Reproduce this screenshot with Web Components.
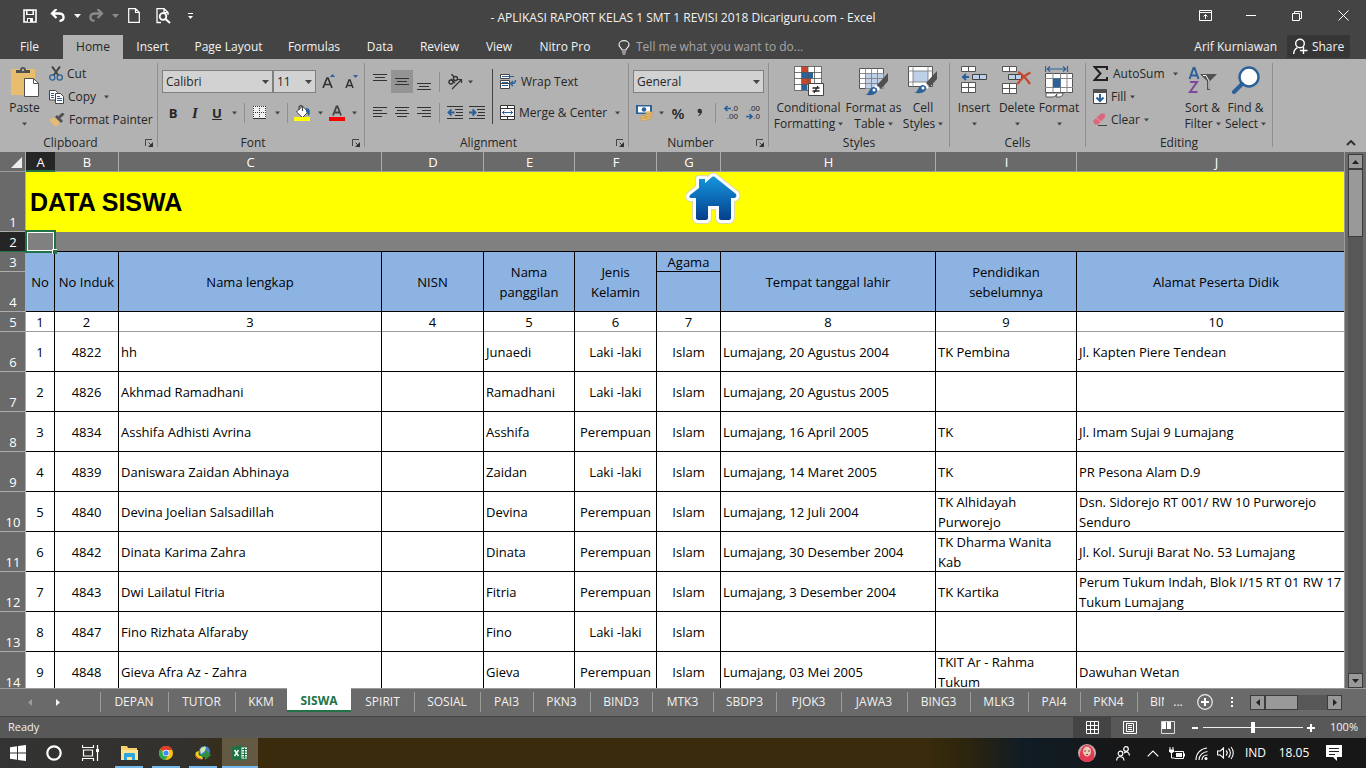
<!DOCTYPE html>
<html lang="id">
<head>
<meta charset="utf-8">
<title>- APLIKASI RAPORT KELAS 1 SMT 1 REVISI 2018 Dicariguru.com - Excel</title>
<style>
html, body {
  height: 100%;
  margin: 0;
  overflow: hidden;
}
body {
  font: 12px/16px "Open Sans", "Noto Sans", sans-serif;
  color: #262626;
}
</style>
</head>
<body>
<excel-app></excel-app>

<script>
// name: [width, height, svg body]
const ICONS = {
  caret: [7, 4, '<path d="M0 0h7L3.500 4z" fill="currentColor"/>'],
  launcher: [9, 9, '<path d="M.5 7V.5H7M3.500 3.500l3 3" stroke="#444" fill="none"/><path d="M8 3v5H3z" fill="#333"/>'],
  chevron: [10, 6, '<path d="M1 5l4-4 4 4" stroke="#333" stroke-width="2" fill="none"/>'],

  save: [14, 14, '<path d="M1 1h12v12H1z" fill="none" stroke="#fff" stroke-width="1.600"/><path d="M3 1h8v5H3zM4 9h6v4H4z" fill="#fff"/><path d="M4.500 2h5v3h-5z" fill="#444"/><path d="M5 10h2v3H5z" fill="#444"/>'],
  undo: [15, 13, '<path d="M1.500 4.500h7.500c6 0 6 7 .5 7.500M6.500 0l-4.500 4.500 4.500 4.500" fill="none" stroke="#fff" stroke-width="2.300"/>'],
  redo: [15, 13, '<path d="M13.500 4.500H6c-6 0-6 7-.5 7.500M8.500 0l4.500 4.500-4.500 4.500" fill="none" stroke="#8a8a8a" stroke-width="2.300"/>'],
  newdoc: [12, 15, '<path d="M.7.700h6.800l3.800 3.800v9.800H.7zM7.500.700v3.800h3.800" fill="none" stroke="#fff" stroke-width="1.200"/>'],
  preview: [15, 16, '<path d="M5 14.500H1V.7h7l4 3.800V7M8 .7v4h4" fill="none" stroke="#fff" stroke-width="1.300"/><circle cx="7" cy="8.500" r="3.300" fill="none" stroke="#fff" stroke-width="1.800"/><path d="M9.500 11l4.500 4" stroke="#fff" stroke-width="2.200"/>'],
  customize: [5, 6, '<path d="M0 .5h5" stroke="#fff"/><path d="M0 3h5L2.500 6z" fill="#fff"/>'],
  ribbonmode: [13, 11, '<path d="M.5.500h12v10H.5zM.5 2.500h12M6.500 9V4.500M4.500 6.500l2-2 2 2" fill="none" stroke="#fff"/>'],
  minimize: [10, 11, '<path d="M0 5.500h10" stroke="#fff"/>'],
  restore: [10, 10, '<path d="M.5 2.500h7v7h-7zM2.500 2V.5h7v7H8" fill="none" stroke="#fff"/>'],
  close: [11, 11, '<path d="M.5.500l10 10M10.500.500l-10 10" stroke="#fff"/>'],
  bulb: [12, 15, '<path d="M4 10c0-2-3-2.500-3-5.500C1 2.500 3 .7 6 .7s5 1.800 5 3.800C11 7.500 8 8 8 10zM4 12h4M4.500 14h3" fill="none" stroke="#e8e8e8" stroke-width="1.200"/>'],
  person: [15, 17, '<circle cx="7" cy="5.500" r="4.300" fill="none" stroke="#fff" stroke-width="1.400"/><path d="M.7 16c0-3 1.300-5 3.800-6.300M10.500 9v7M7 12.500h7.500" stroke="#fff" stroke-width="1.400" fill="none"/>'],

  paste: [30, 32, '<rect x="1" y="3" width="24" height="26" fill="#e8bd6d"/><path d="M6 7V4h4c0-4 6-4 6 0h4v3z" fill="#505050"/><circle cx="13" cy="4" r="1.200" fill="#b2b2b2"/><path d="M14.500 12.500h9l5 5v13h-14z" fill="#fff" stroke="#505050"/><path d="M23.500 12.500v5h5" fill="none" stroke="#505050"/>'],
  cut: [14, 15, '<path d="M3 .5l6.500 9M11 .5L4.500 9.500" stroke="#444" stroke-width="2"/><circle cx="3.300" cy="11.500" r="2.600" fill="none" stroke="#2b6099" stroke-width="1.300"/><circle cx="10.700" cy="11.500" r="2.600" fill="none" stroke="#2b6099" stroke-width="1.300"/>'],
  copy: [15, 14, '<path d="M.5.500h6l2 2v7.500h-8z" fill="#fff" stroke="#444"/><path d="M2 3.500h3M2 5.500h3M2 7.500h3" stroke="#2b6099"/><path d="M6.500 3.500h5l3 3v7h-8z" fill="#fff" stroke="#444"/><path d="M8 6.500h3M8 8.500h5M8 10.500h5" stroke="#2b6099"/>'],
  painter: [16, 14, '<path d="M0 6.500l6-2 5 5-4 4.500C4.500 12.500 2 9.500 0 6.500z" fill="#e6bb74"/><path d="M6 4l2-2 6 6-2 2z" fill="#505050"/><path d="M10 4.500L14.500.500" stroke="#505050" stroke-width="3"/>'],

  growfont: [13, 15, '<path d="M1 14L5 4h1l4 10M2.500 10.500h6" fill="none" stroke="#333" stroke-width="1.700"/><path d="M8 3h5L10.500 0z" fill="#2b6099"/>'],
  shrinkfont: [13, 15, '<path d="M1 14l3-8h1l3 8M2.300 11.500h4.500" fill="none" stroke="#333" stroke-width="1.500"/><path d="M8 1h5l-2.500 3z" fill="#2b6099"/>'],
  borders: [14, 14, '<path d="M0 0h13v12H0z" fill="#f2f2f2"/><path d="M.5 0v12M6.500 0v12M12.500 0v12M0 .5h13M0 6.500h13" stroke="#333" stroke-dasharray="1 1"/><path d="M0 12.500h13" stroke="#333"/>'],
  fill: [18, 16, '<path d="M2.500 7l6-6 5.500 6-5.500 5.500z" fill="#fff" stroke="#444"/><path d="M5 5V2.500C5 0 8.500 0 8.500 2.500V6" fill="none" stroke="#444" stroke-width="1.200"/><path d="M12 3c3.500 0 5 3 3 8-1.500-1-1-3-3-4z" fill="#2b6099"/><path d="M0 12h16v4H0z" fill="#ff0"/>'],
  fontcolor: [16, 16, '<path d="M4 10.500L7.500 1.500h1l3.500 9M5.500 7.500h5" fill="none" stroke="#444" stroke-width="1.800"/><path d="M0 12h16v4H0z" fill="red"/>'],

  atop: [14, 17, '<path d="M0 1.500h14M2 4.500h10M0 7.500h14" stroke="#333"/>'],
  amiddle: [14, 17, '<path d="M0 5.500h14M2 8.500h10M0 11.500h14" stroke="#333"/>'],
  abottom: [14, 17, '<path d="M0 10.500h14M2 13.500h10M0 16.500h14" stroke="#333"/>'],
  aleft: [14, 11, '<path d="M0 .5h14M0 3.500h9M0 6.500h14M0 9.500h9" stroke="#333"/>'],
  acenter: [14, 11, '<path d="M0 .5h14M2 3.500h10M0 6.500h14M2 9.500h10" stroke="#333"/>'],
  aright: [14, 11, '<path d="M0 .5h14M5 3.500h9M0 6.500h14M5 9.500h9" stroke="#333"/>'],
  orient: [17, 16, '<g fill="none" stroke="#333" stroke-width="1.400"><circle cx="4" cy="8" r="2"/><path d="M4 5l4 4"/><circle cx="8.500" cy="4.500" r="2"/><path d="M4.500 0L7 3"/></g><path d="M5 15L14 6M11 5.500h3.500V9" fill="none" stroke="#333" stroke-width="1.200"/>'],
  outdent: [16, 13, '<path d="M0 .5h16M8 3.500h8M9 6.500h7M8 9.500h8M0 12.500h16" stroke="#333"/><path d="M7.500 6.500H2M4.500 3.500l-3 3 3 3" stroke="#2b6099" stroke-width="1.800" fill="none"/>'],
  indent: [16, 13, '<path d="M0 .5h16M8 3.500h8M9 6.500h7M8 9.500h8M0 12.500h16" stroke="#333"/><path d="M0 6.500h5.500M3.500 3.500l3 3-3 3" stroke="#2b6099" stroke-width="1.800" fill="none"/>'],
  wrap: [17, 16, '<path d="M.5.500h9v4h-9zM.5 6.500h9v3h-9zM.5 9.500h9v5h-9z" fill="#fff" stroke="#444"/><path d="M2 2.500h12M2 8.500h6M2 11.500h6" stroke="#2b6099"/><path d="M15.500 6c0 3-1 3.500-4.500 3.500M13 7l-2.500 2.500L13 12" stroke="#2b6099" stroke-width="1.400" fill="none"/>'],
  merge: [15, 15, '<path d="M.5.500h14v14H.5z" fill="#fff" stroke="#333"/><path d="M.5 3.500h14M.5 11.500h14M7.500 0v3.500M7.500 11.500V15" stroke="#333"/><path d="M2 7.500h11M4.500 5.500l-2 2 2 2M10.500 5.500l2 2-2 2" stroke="#2b6099" fill="none"/>'],

  currency: [17, 16, '<path d="M0 0h16v9H0z" fill="#2b6099"/><path d="M2 1.500h12v6H2z" fill="#fff"/><circle cx="8" cy="4.500" r="2.300" fill="#2b6099"/><g fill="#e8bd6d" stroke="#b98c45" stroke-width=".5"><ellipse cx="13" cy="8" rx="3.500" ry="1.400"/><ellipse cx="13" cy="10.500" rx="3.500" ry="1.400"/><ellipse cx="12" cy="13" rx="3.500" ry="1.400"/><ellipse cx="7" cy="12" rx="3" ry="1.300"/><ellipse cx="8" cy="14.500" rx="3.500" ry="1.300"/></g>'],
  comma: [6, 10, '<circle cx="2.700" cy="3" r="2.200" fill="#333"/><path d="M4.900 2.500c.3 3-1 4.500-3.500 5.500l-.4-.8c1.500-.8 2.300-1.700 2.200-3z" fill="#333"/>'],
  arrowleft: [7, 7, '<path d="M7 3.500H1.500M3.500 1L1 3.500 3.500 6" stroke="#2b6099" stroke-width="1.600" fill="none"/>'],
  arrowright: [7, 7, '<path d="M0 3.500h5.500M3.500 1L6 3.500 3.500 6" stroke="#2b6099" stroke-width="1.600" fill="none"/>'],

  conditional: [30, 30, '<path d="M.5.500h27v24H.5z" fill="#fff"/><path d="M8 0h6v6H8zM8 12h9v6H8z" fill="#c8472c"/><path d="M8 6h11v6H8zM8 18h5v6H8z" fill="#2b6099"/><path d="M.5.500h27v24H.5zM7.500 0v25M14 0v25M20.500 0v25M0 6.500h28M0 12.500h28M0 18.500h28" stroke="#555" fill="none" stroke-width=".8"/><path d="M14.500 17.500h15v12h-15z" fill="#fff" stroke="#444"/><path d="M18.500 22h7M18.500 25h7M24 20l-4 7" stroke="#222" stroke-width="1.300"/>'],
  astable: [30, 30, '<path d="M.5 2.500h24v20H.5z" fill="#fff" stroke="#555"/><path d="M6.500 7.500h18v15h-18z" fill="#bdd0e8"/><path d="M6.500 2v21M12.500 2v21M18.500 2v21M0 7.500h25M0 12.500h25M0 17.500h25" stroke="#777" stroke-width=".8"/><path d="M29 7v8l-7 8-4-4z" fill="#505050"/><path d="M17 19l4 4-2 2-4-4z" fill="#fff"/><path d="M6 29c4 0 4-8 9-8 4 1 4 4 2 6-3 3-7 2-11 2z" fill="#2b6099"/><circle cx="15" cy="24" r="1.500" fill="#fff"/>'],
  cellstyles: [30, 30, '<path d="M.5.500h24v20H.5z" fill="#fff" stroke="#555"/><path d="M5 5h15v11H5z" fill="#bdd0e8"/><path d="M5 0v21M20 0v21M0 5h25M0 16h25" stroke="#777" stroke-width=".8"/><path d="M29 5v8l-7 8-4-4z" fill="#505050"/><path d="M17 17l4 4-2 2-4-4z" fill="#fff"/><path d="M6 27c4 0 4-8 9-8 4 1 4 4 2 6-3 3-7 2-11 2z" fill="#2b6099"/><circle cx="15" cy="22" r="1.500" fill="#fff"/>'],
  insert: [26, 30, '<path d="M.5.500h14v5H.5zM7.500.500v5M.5 16.500h14v10H.5zM7.500 16.500v10M.5 21.500h14" fill="#fff" stroke="#555"/><path d="M11.500 8.500h14v5h-14zM18.500 8.500v5" fill="#bdd0e8" stroke="#444"/><path d="M1 11h7M5 8l-3 3 3 3" stroke="#2b6099" fill="none" stroke-width="1.800"/>'],
  remove: [30, 30, '<path d="M.5.500h14v5H.5zM7.500.500v5M.5 17.500h14v10H.5zM7.500 17.500v10M.5 22.500h14" fill="#fff" stroke="#555"/><path d="M6.500 8.500h13v5h-13zM13.500 8.500v5" fill="#bdd0e8" stroke="#444"/><path d="M16 6c4 2 8 6 12 12M28.500 6.500C23 9 19 13 15.500 18" stroke="#c8472c" fill="none" stroke-width="2.300"/>'],
  format: [28, 32, '<path d="M.5 0v6M22.500 0v6M2 3h19M5 .5L2.300 3 5 5.500M18 .5L20.700 3 18 5.500" stroke="#2b6099" fill="none" stroke-width="1.200"/><path d="M.5 7.500h27v19H.5z" fill="#fff" stroke="#555"/><path d="M8 7v20M15.500 7v20M22 7v20M0 12.500h28M0 21.500h28" stroke="#888"/><path d="M8 12.500h7.500v9H8z" fill="#2b6099"/><path d="M1 27h17c0 3-2 4-4 4h-3l1-3c-1 2-3 3-5 3H1z" fill="#fff" stroke="#555"/>'],
  sum: [16, 15, '<path d="M14 4V1H1.500l6 6.500-6 6.500H14v-3" fill="none" stroke="#222" stroke-width="2"/>'],
  filldown: [14, 15, '<path d="M.5.500h13v14H.5z" fill="#fff" stroke="#444"/><path d="M0 0h14v4H0z" fill="#505050"/><path d="M7 5v7M3.500 8.500L7 12l3.500-3.500" stroke="#2b6099" stroke-width="2" fill="none"/>'],
  erase: [14, 13, '<path d="M0 8l8-7.500h3.500l1 3L5 11.500H2z" fill="#d9687c"/><path d="M3 4.500l5 4.500" stroke="#eba0ab"/><path d="M5 12.500h9" stroke="#444"/>'],
  sortfilter: [29, 28, '<path d="M1.500 13L5.500 2h1l4 11M3 9.500h6" fill="none" stroke="#2b6099" stroke-width="2"/><path d="M2 16h7L2 26h7.500" fill="none" stroke="#7f47a0" stroke-width="2"/><path d="M12 8h17l-7 7v9h-3v-9z" fill="#505050"/><path d="M15 9.500h3l3 5.500v8" fill="none" stroke="#fff"/>'],
  find: [28, 28, '<circle cx="17" cy="11" r="9.500" fill="#fff" stroke="#2b6099" stroke-width="2.400"/><path d="M10 18l-8 8" stroke="#2b6099" stroke-width="4" stroke-linecap="round"/>'],

  house: [56, 54, '<defs><linearGradient id="sky" x2="0" y2="1"><stop offset="0" stop-color="#1595dd"/><stop offset="1" stop-color="#053f8c"/></linearGradient></defs><path d="M26 5c2-1 3 0 4 1l20 16c1 2 0 4-2 4h-3v20c0 1-1 2-2 2h-8c-1 0-2-1-2-2V34h-11v12c0 1-1 2-2 2h-8c-1 0-2-1-2-2V26H5c-2 0-2-2-1-3l9-7V7h6v4z" fill="#ddd" stroke="#d8d8b0" stroke-width="8" stroke-linejoin="round"/><path d="M26 5c2-1 3 0 4 1l20 16c1 2 0 4-2 4h-3v20c0 1-1 2-2 2h-8c-1 0-2-1-2-2V34h-11v12c0 1-1 2-2 2h-8c-1 0-2-1-2-2V26H5c-2 0-2-2-1-3l9-7V7h6v4z" fill="url(#sky)" stroke="#fff" stroke-width="6" stroke-linejoin="round" paint-order="stroke"/>'],
  selectall: [11, 11, '<path d="M11 0v11H0z" fill="#eee"/>'],
  up: [7, 4, '<path d="M0 4h7L3.500 0z" fill="#222"/>'],
  left: [4, 7, '<path d="M4 0v7L0 3.500z" fill="currentColor"/>'],
  right: [4, 7, '<path d="M0 0v7l4-3.500z" fill="currentColor"/>'],
  addsheet: [16, 16, '<circle cx="8" cy="8" r="7.300" fill="none" stroke="#eee" stroke-width="1.200"/><path d="M8 4v8M4 8h8" stroke="#fff" stroke-width="2"/>'],
  dots: [2, 11, '<path d="M0 0h2v2H0zM0 4h2v2H0zM0 8h2v2H0z" fill="#fff"/>'],
  viewnormal: [13, 13, '<path d="M.5.500h12v12H.5zM4.500 0v13M8.500 0v13M0 4.500h13M0 8.500h13" fill="none" stroke="#fff"/>'],
  viewpage: [14, 13, '<path d="M.5.500h13v12H.5zM3.500 2.500h7v8h-7zM5 4.500h4M5 6.500h4M5 8.500h4" fill="none" stroke="#fff"/>'],
  viewbreak: [14, 13, '<path d="M.5.500h13v12H.5z" fill="none" stroke="#ddd"/><path d="M1 1h4v7H1zM6 1h4v7H6z" fill="#fff"/>'],
  minus: [6, 2, '<path d="M0 0h6v2H0z" fill="#fff"/>'],
  plus: [8, 8, '<path d="M0 4h8M4 0v8" stroke="#fff" stroke-width="2"/>'],

  windows: [16, 16, '<path d="M0 2.300l7-1v6.200H0zM8 1.100L16 0v7.500H8zM0 8.500h7v6.200l-7-1zM8 8.500h8V16l-8-1.100z" fill="#fff"/>'],
  cortana: [16, 16, '<circle cx="8" cy="8" r="6.700" fill="none" stroke="#fff" stroke-width="2.200"/>'],
  taskview: [17, 16, '<path d="M1.500 5h9v6h-9zM.5 0v2.500h11V0M.5 16v-2.500h11V16M15.500 0v16" fill="none" stroke="#fff" stroke-width="1.200"/><path d="M14 4h3v3h-3z" fill="#fff"/>'],
  explorer: [17, 15, '<path d="M0 2V0h6l1 2h9v12H0z" fill="#f7d070"/><path d="M0 4h17v10H0z" fill="#fde591"/><path d="M3 14V8c0-1 1-1 1-1h9s1 0 1 1v6h-3v-3H6v3z" fill="#2fa5e0"/>'],
  chrome: [14, 14, '<circle cx="7" cy="7" r="7" fill="#fbc116"/><path d="M7 7L1 3.500C4-1.500 11-1 13.200 4H7z" fill="#e33b2e"/><path d="M1 3.500C-1.500 8 1 13.500 6.500 14L9.500 8.500H7z" fill="#2da94f"/><circle cx="7" cy="7" r="3.300" fill="#fff"/><circle cx="7" cy="7" r="2.600" fill="#4285f4"/>'],
  idm: [16, 14, '<circle cx="9.500" cy="5.500" r="5.500" fill="#3c83c8"/><path d="M5 4c1-3 4-4 6-3l-1 4-4 3z" fill="#d5e6a8"/><path d="M1 6c-2 6 2 8 7 7l-1-3C4 10 3 9 4 5z" fill="#e8d320"/><path d="M4 8c2 1 4 1 6-1V4l6 5-6 5v-3c-3 0-5-1-6-3z" fill="#2e8f35"/><path d="M1 10c1 2 3 3 5 3" stroke="#c33" fill="none"/>'],
  excel: [16, 16, '<path d="M0 2l9-2v16l-9-2z" fill="#1f7246"/><path d="M9 2h6.500v12H9z" fill="#fff" stroke="#1f7246"/><path d="M10 4.500h5M10 7h5M10 9.500h5M10 12h5M12.500 3v10" stroke="#1f7246"/><path d="M2.500 5l4 6M6.500 5l-4 6" stroke="#fff" stroke-width="1.400"/>'],
  avatar: [18, 18, '<circle cx="9" cy="9" r="9" fill="#c9a6a6"/><path d="M2 14.500C1 8 4 1 9 1s8 7 7 13.500c-3 4.500-11 4.500-14 0z" fill="#e03a55"/><ellipse cx="9" cy="7.500" rx="4" ry="5" fill="#edc9b8"/><path d="M6 7h2M10 7h2M8 10.500h2" stroke="#7a4438"/>'],
  people: [14, 15, '<g fill="none" stroke="#fff" stroke-width="1.200"><circle cx="4.500" cy="7.500" r="2.300"/><path d="M.7 14.500c0-5 7-5 7.300 0"/><circle cx="10" cy="3" r="2.300"/><path d="M8 7c3-2 5-1 5.500 2.500"/></g>'],
  trayup: [12, 7, '<path d="M.7 6.300L6 1l5.300 5.300" stroke="#fff" fill="none" stroke-width="1.200"/>'],
  battery: [16, 13, '<path d="M5.500 4.500h9v7h-9" fill="none" stroke="#fff"/><path d="M7 6h6v4H7zM15 6.500h1v3h-1z" fill="#fff"/><path d="M1 0v3M4 0v3M2.500 5v6h3" stroke="#fff" fill="none"/><path d="M0 2.500h5v2L3.500 6h-2L0 4.500z" fill="#fff"/>'],
  wifi: [13, 13, '<g fill="none" stroke="#fff" stroke-width="1.100"><path d="M1 13C1 6 6 1.500 12 1"/><path d="M4 13c0-5 4-8 8.500-8.500"/><path d="M7 13c0-3 2-5 5.500-5"/></g><circle cx="11" cy="11.500" r="1.500" fill="#fff"/>'],
  volume: [17, 14, '<path d="M.6 5h2.700L6.500 2v10L3.300 9H.6zM9 4.500c1.500 1.500 1.500 3.500 0 5M11.500 2.500c2.500 2.500 2.500 6.500 0 9M14 1c3 3.500 3 8.500 0 12" fill="none" stroke="#fff" stroke-width="1.100"/>'],
  notify: [16, 16, '<path d="M0 0h16v12h-5v4l-4-4H0z" fill="#fff"/><path d="M3 3.500h10M3 6.500h10M3 9.500h6" stroke="#222"/>'],
};

const svg = (name) => {
  const [w, h, body] = ICONS[name];
  return `<svg width="${w}" height="${h}" viewBox="0 0 ${w} ${h}" aria-hidden="true">${body}</svg>`;
};

const base = `
button, select, input { font: inherit; color: inherit; margin: 0; }
button { display: flex; align-items: center; justify-content: center; border: 0; padding: 0; background: none; white-space: nowrap; }
svg { display: block; flex: none; }
`;

/** Declares an element from a style sheet and a render function. */
function component(tag, style, render) {
  customElements.define(tag, class extends HTMLElement {
    constructor() {
      super();
      this.attachShadow({ mode: "open" });
    }
    connectedCallback() {
      const template = document.createElement("template");
      template.innerHTML = `<style>${base}${style}</style>${render(this)}`;
      this.shadowRoot.replaceChildren(template.content.cloneNode(true));
    }
  });
}

const attr = (el, name, fallback = "") => el.getAttribute(name) ?? fallback;

/* ---------- title bar and tabs ---------- */

component("title-bar", `
:host { display: grid; grid-template-columns: 1fr auto 1fr; align-items: center; height: 35px; background: #444; color: #f2f2f2; }
.quick { display: flex; align-items: center; padding: 0 0 4px 18px; }
.quick button { height: 24px; width: 30px; }
.quick .save { width: 24px; }
.quick .drop { width: 10px; }
.quick .new { width: 28px; }
.quick .end { width: 24px; }
.quick .off { color: #8a8a8a; }
h1 { margin: 0; font-size: 12px; font-weight: 400; }
.window { display: flex; justify-content: flex-end; padding-bottom: 4px; }
.window button { width: 46px; height: 30px; }
`, () => `
<div class="quick">
  <button class="save" aria-label="Save">${svg("save")}</button>
  <button aria-label="Undo">${svg("undo")}</button>
  <button class="drop" aria-label="Undo list">${svg("caret")}</button>
  <button class="new" aria-label="Redo">${svg("redo")}</button>
  <button class="drop off" aria-label="Redo list">${svg("caret")}</button>
  <button class="new" aria-label="New">${svg("newdoc")}</button>
  <button aria-label="Print Preview">${svg("preview")}</button>
  <button class="end" aria-label="Customize Quick Access Toolbar">${svg("customize")}</button>
</div>
<h1><slot></slot></h1>
<div class="window">
  <button aria-label="Ribbon Display Options">${svg("ribbonmode")}</button>
  <button aria-label="Minimize">${svg("minimize")}</button>
  <button aria-label="Restore">${svg("restore")}</button>
  <button aria-label="Close">${svg("close")}</button>
</div>`);

const MENU = [["File", 59], ["Home", 60], ["Insert", 59], ["Page Layout", 93], ["Formulas", 78],
  ["Data", 54], ["Review", 65], ["View", 54], ["Nitro Pro", 78]];

component("ribbon-tabs", `
:host { display: flex; height: 24px; background: #444; color: #f2f2f2; }
nav { display: flex; }
nav button:first-child { margin-right: 4px; }
nav .on { background: #b2b2b2; color: #262626; }
label { display: flex; align-items: center; gap: 6px; margin-left: 14px; flex: 1; }
input { width: 200px; border: 0; background: none; padding: 0; outline: 0; }
input::placeholder { color: #a6a6a6; opacity: 1; }
.share { gap: 4px; width: 63px; margin: 0 16px 1px 10px; background: #363636; }
.user { align-self: center; }
`, () => `
<nav>${MENU.map(([name, width]) =>
  `<button class="${name === "Home" ? "on" : ""}" style="width:${width}px">${name}</button>`).join("")}</nav>
<label>${svg("bulb")}<input type="text" aria-label="Tell me" placeholder="Tell me what you want to do..."></label>
<span class="user">Arif Kurniawan</span>
<button class="share">${svg("person")}Share</button>`);

/* ---------- ribbon ---------- */

component("ribbon-group", `
:host { display: flex; height: 93px; }
.main { flex: 1; min-width: 0; display: flex; flex-direction: column; }
.body { flex: 1; display: flex; min-height: 0; }
.foot { display: flex; align-items: center; height: 18px; }
.name { flex: 1; text-align: center; }
.foot button { width: 16px; height: 16px; }
.line { width: 1px; margin: 4px 0 5px; background: #8f8f8f; }
`, (el) => `
<div class="main">
  <div class="body"><slot></slot></div>
  <div class="foot"><span class="name">${attr(el, "label")}</span>
  ${el.hasAttribute("launcher") ? `<button aria-label="${attr(el, "label")} settings">${svg("launcher")}</button>` : ""}</div>
</div>
<div class="line"></div>`);

/** Large button: icon over one or two lines, the last one with a caret. */
component("ribbon-big", `
:host { display: block; flex: none; padding-top: 7px; }
button { flex-direction: column; width: 100%; }
.icon { height: 34px; display: flex; align-items: flex-start; }
.line { display: flex; align-items: center; justify-content: center; gap: 3px; height: 16px; color: #262626; }
.line svg { width: 5px; color: #444; }
`, (el) => `
<button>
  <span class="icon">${svg(attr(el, "icon"))}</span>
  <span class="line">${attr(el, "label")}</span>
  <span class="line">${attr(el, "second")}${svg("caret")}</span>
</button>`);

/** Small button: icon with an optional text and caret. */
component("ribbon-small", `
:host { display: flex; flex: none; height: 23px; min-width: 22px; }
:host([on]) { background: #949494; }
button { flex: 1; }
.icon { display: flex; }
.text { padding-left: 4px; }
.caret { color: #444; }
* + .caret { padding-left: 4px; }
:host([far]) .caret { padding-left: 8px; }
.caret svg { width: 5px; }
`, (el) => `
<button aria-label="${attr(el, "label", attr(el, "text"))}">
  ${el.hasAttribute("icon") ? `<span class="icon">${svg(attr(el, "icon"))}</span>` : ""}
  ${el.hasAttribute("text") ? `<span class="text">${attr(el, "text")}</span>` : ""}
  ${el.hasAttribute("drop") ? `<span class="caret">${svg("caret")}</span>` : "<slot></slot>"}
</button>`);

component("ribbon-select", `
:host { display: grid; flex: none; height: 23px; }
select { grid-area: 1 / 1; appearance: none; box-sizing: border-box; width: 100%; height: 23px; padding: 0 18px 0 3px;
  border: 1px solid #808080; border-radius: 0; background: #d2d2d2; }
span { grid-area: 1 / 1; justify-self: end; align-self: center; padding-right: 4px; color: #444; pointer-events: none; }
`, (el) => `
<select aria-label="${attr(el, "label")}"><option>${attr(el, "value")}</option></select>
<span>${svg("caret")}</span>`);

component("excel-ribbon", `
:host { display: grid; grid-template-columns: 158px 207px 264px 140px 181px 136px 187px 1fr; height: 93px; background: #b2b2b2; }
.list { display: flex; flex-direction: column; align-items: flex-start; padding-top: 3px; }
.rows { display: flex; flex-direction: column; gap: 8px; padding-top: 11px; }
.row { display: flex; align-items: center; height: 23px; }
.sep { width: 1px; height: 20px; background: #8f8f8f; margin: 0 4px; flex: none; }
.tall { width: 1px; background: #444; margin: 10px 7px 10px 4px; }
.drop { min-width: 12px; width: 12px; }
.b { font-weight: 700; font-size: 13px; }
.i { font-style: italic; font-family: "Liberation Serif", serif; font-weight: 700; font-size: 15px; }
.u { font-weight: 700; font-size: 13px; text-decoration: underline; }
.pct { font-size: 15px; font-weight: 600; }
.dec { display: flex; flex-direction: column; align-items: flex-end; font: 8px/8px "Liberation Sans", sans-serif; }
.dec span { display: flex; align-items: center; }
.end { display: flex; align-items: flex-end; justify-content: flex-end; padding: 0 10px 6px 0; }
`, () => `
<ribbon-group label="Clipboard" launcher>
  <ribbon-big icon="paste" label="Paste" style="width:49px"></ribbon-big>
  <div class="list">
    <ribbon-small icon="cut" text="Cut"></ribbon-small>
    <ribbon-small icon="copy" text="Copy" drop far></ribbon-small>
    <ribbon-small icon="painter" text="Format Painter"></ribbon-small>
  </div>
</ribbon-group>
<ribbon-group label="Font" launcher>
  <div class="rows" style="padding-left:4px">
    <div class="row">
      <ribbon-select label="Font" value="Calibri" style="width:111px"></ribbon-select>
      <ribbon-select label="Font Size" value="11" style="width:43px"></ribbon-select>
      <ribbon-small icon="growfont" label="Increase Font Size" style="width:24px"></ribbon-small>
      <ribbon-small icon="shrinkfont" label="Decrease Font Size"></ribbon-small>
    </div>
    <div class="row">
      <ribbon-small label="Bold"><span class="b">B</span></ribbon-small>
      <ribbon-small label="Italic"><span class="i">I</span></ribbon-small>
      <ribbon-small label="Underline"><span class="u">U</span></ribbon-small>
      <ribbon-small class="drop" drop label="Underline options"></ribbon-small>
      <span class="sep"></span>
      <ribbon-small icon="borders" label="Borders"></ribbon-small>
      <ribbon-small class="drop" drop label="Border options"></ribbon-small>
      <span class="sep"></span>
      <ribbon-small icon="fill" label="Fill Color"></ribbon-small>
      <ribbon-small class="drop" drop label="Fill colors"></ribbon-small>
      <ribbon-small icon="fontcolor" label="Font Color"></ribbon-small>
      <ribbon-small class="drop" drop label="Font colors"></ribbon-small>
    </div>
  </div>
</ribbon-group>
<ribbon-group label="Alignment" launcher>
  <div class="rows" style="padding-left:4px">
    <div class="row">
      <ribbon-small icon="atop" label="Top Align"></ribbon-small>
      <ribbon-small icon="amiddle" label="Middle Align" on></ribbon-small>
      <ribbon-small icon="abottom" label="Bottom Align"></ribbon-small>
      <span class="sep"></span>
      <ribbon-small icon="orient" label="Orientation" drop style="width:32px"></ribbon-small>
    </div>
    <div class="row">
      <ribbon-small icon="aleft" label="Align Left"></ribbon-small>
      <ribbon-small icon="acenter" label="Center"></ribbon-small>
      <ribbon-small icon="aright" label="Align Right"></ribbon-small>
      <span class="sep"></span>
      <ribbon-small icon="outdent" label="Decrease Indent"></ribbon-small>
      <ribbon-small icon="indent" label="Increase Indent"></ribbon-small>
    </div>
  </div>
  <span class="tall"></span>
  <div class="rows">
    <div class="row"><ribbon-small icon="wrap" text="Wrap Text"></ribbon-small></div>
    <div class="row"><ribbon-small icon="merge" text="Merge &amp; Center" drop far></ribbon-small></div>
  </div>
</ribbon-group>
<ribbon-group label="Number" launcher>
  <div class="rows" style="padding-left:4px">
    <div class="row"><ribbon-select label="Number Format" value="General" style="width:131px"></ribbon-select></div>
    <div class="row">
      <ribbon-small icon="currency" label="Accounting Format"></ribbon-small>
      <ribbon-small class="drop" drop label="Accounting options"></ribbon-small>
      <ribbon-small label="Percent Style"><span class="pct">%</span></ribbon-small>
      <ribbon-small icon="comma" label="Comma Style"></ribbon-small>
      <span class="sep"></span>
      <ribbon-small label="Increase Decimal"><div class="dec"><span>${svg("arrowleft")}.0</span><span>.00</span></div></ribbon-small>
      <ribbon-small label="Decrease Decimal"><div class="dec"><span>.00</span><span>${svg("arrowright")}.0</span></div></ribbon-small>
    </div>
  </div>
</ribbon-group>
<ribbon-group label="Styles">
  <ribbon-big icon="conditional" label="Conditional" second="Formatting" style="width:79px"></ribbon-big>
  <ribbon-big icon="astable" label="Format as" second="Table" style="width:51px"></ribbon-big>
  <ribbon-big icon="cellstyles" label="Cell" second="Styles" style="width:48px"></ribbon-big>
</ribbon-group>
<ribbon-group label="Cells">
  <ribbon-big icon="insert" label="Insert" style="width:48px"></ribbon-big>
  <ribbon-big icon="remove" label="Delete" style="width:38px"></ribbon-big>
  <ribbon-big icon="format" label="Format" style="width:46px"></ribbon-big>
</ribbon-group>
<ribbon-group label="Editing">
  <div class="list" style="padding-left:7px;width:88px">
    <ribbon-small icon="sum" text="AutoSum" drop far></ribbon-small>
    <ribbon-small icon="filldown" text="Fill" drop></ribbon-small>
    <ribbon-small icon="erase" text="Clear" drop></ribbon-small>
  </div>
  <ribbon-big icon="sortfilter" label="Sort &amp;" second="Filter" style="width:43px"></ribbon-big>
  <ribbon-big icon="find" label="Find &amp;" second="Select" style="width:43px"></ribbon-big>
</ribbon-group>
<div class="end"><button aria-label="Collapse the Ribbon">${svg("chevron")}</button></div>`);

/* ---------- worksheet ---------- */

const COLUMNS = [["A", 29], ["B", 64], ["C", 263], ["D", 102], ["E", 91], ["F", 82], ["G", 64],
  ["H", 215], ["I", 141], ["J", 0]];

const HEADINGS = ["No", "No Induk", "Nama lengkap", "NISN", "Nama\npanggilan", "Jenis\nKelamin", "Agama",
  "Tempat tanggal lahir", "Pendidikan\nsebelumnya", "Alamat Peserta Didik"];

const STUDENTS = [
  ["4822", "hh", "Junaedi", "Laki -laki", "Lumajang, 20 Agustus 2004", "TK Pembina", "Jl. Kapten Piere Tendean"],
  ["4826", "Akhmad Ramadhani", "Ramadhani", "Laki -laki", "Lumajang, 20 Agustus 2005", "", ""],
  ["4834", "Asshifa Adhisti Avrina", "Asshifa", "Perempuan", "Lumajang, 16 April 2005", "TK", "Jl. Imam Sujai 9 Lumajang"],
  ["4839", "Daniswara Zaidan Abhinaya", "Zaidan", "Laki -laki", "Lumajang, 14 Maret 2005", "TK", "PR Pesona Alam D.9"],
  ["4840", "Devina Joelian Salsadillah", "Devina", "Perempuan", "Lumajang, 12 Juli 2004", "TK Alhidayah\nPurworejo", "Dsn. Sidorejo RT 001/ RW 10 Purworejo\nSenduro"],
  ["4842", "Dinata Karima Zahra", "Dinata", "Perempuan", "Lumajang, 30 Desember 2004", "TK Dharma Wanita\nKab", "Jl. Kol. Suruji Barat No. 53 Lumajang"],
  ["4843", "Dwi Lailatul Fitria", "Fitria", "Perempuan", "Lumajang, 3 Desember 2004", "TK Kartika", "Perum Tukum Indah, Blok I/15 RT 01 RW 17\nTukum Lumajang"],
  ["4847", "Fino Rizhata Alfaraby", "Fino", "Laki -laki", "", "", ""],
  ["4848", "Gieva Afra Az - Zahra", "Gieva", "Perempuan", "Lumajang, 03 Mei 2005", "TKIT Ar - Rahma\nTukum", "Dawuhan Wetan"],
];

const studentRow = ([nis, name, nick, sex, born, school, address], i) => `
<tr class="tall"><th>${i + 6}</th><td class="c">${i + 1}</td><td class="c">${nis}</td><td>${name}</td><td></td>
<td>${nick}</td><td class="c">${sex}</td><td class="c">Islam</td><td>${born}</td><td>${school}</td><td>${address}</td></tr>`;

component("sheet-grid", `
:host { display: flex; flex: 1; min-height: 0; background: #6a6a6a; font: 13px/20px "Open Sans", sans-serif; color: #000; }
.view { flex: 1; min-width: 0; overflow: hidden; border-right: 1px solid #9b9b9b; }
table { table-layout: fixed; width: calc(100% + 12px); border-spacing: 0; }
th, td { padding: 0; height: 20px; font-weight: 400; }
th { background: #6a6a6a; color: #fff; vertical-align: bottom; box-shadow: inset -1px -1px #ababab; }
thead th { box-shadow: inset -1px 0 #ababab, inset 0 -1px #9b9b9b; }
thead th.on { background: #252525; box-shadow: inset 0 -2px #217346; }
tbody th.on { background: #252525; box-shadow: inset -1px -1px #217346; }
thead svg { margin: 0 4px 4px auto; }
td { background: #fff; white-space: pre; overflow: hidden; padding-left: 2px; box-shadow: inset -1px -1px #000; }
td.c { text-align: center; padding: 0 1px 0 0; }
.title td { position: relative; height: 60px; padding-left: 4px; background: #ff0; box-shadow: none; font: bold 25px/60px "Liberation Sans", Arial, sans-serif; }
.title svg { position: absolute; left: calc(50% - 5px); top: 0; }
.gap td { background: #808080; box-shadow: inset 0 -1px #000; }
.gap td.cursor { position: relative; overflow: visible; }
.cursor i { position: absolute; inset: -2px -1px -1px -1px; border: 2px solid #217346; box-shadow: inset 0 0 0 1px #fff; z-index: 1; }
.cursor i::after { content: ""; position: absolute; right: -3px; bottom: -3px; width: 4px; height: 4px; background: #217346; border: solid #fff; border-width: 1px 0 0 1px; }
.head td { background: #8db3e2; }
.tall > * { height: 40px; }
.numbers td { box-shadow: inset -1px 0 #000, inset 0 -1px #9b9b9b; }
.bar { display: flex; flex-direction: column; width: 15px; margin: 2px 3px 0 3px; background: #575757; }
.bar button { box-sizing: border-box; height: 15px; border: 1px solid #3c3c3c; background: #999; color: #222; }
.thumb { box-sizing: border-box; height: 68px; border: 1px solid #3c3c3c; background: #999; }
.space { flex: 1; }
`, () => `
<div class="view">
<table>
  <colgroup><col style="width:26px">${COLUMNS.map(([, w]) => w ? `<col style="width:${w}px">` : "<col>").join("")}</colgroup>
  <thead><tr><th>${svg("selectall")}</th>${COLUMNS.map(([name]) => `<th class="${name === "A" ? "on" : ""}">${name}</th>`).join("")}</tr></thead>
  <tbody>
    <tr class="title"><th>1</th><td colspan="10">DATA SISWA${svg("house")}</td></tr>
    <tr class="gap"><th class="on">2</th><td class="cursor"><i></i></td><td colspan="9"></td></tr>
    <tr class="head"><th>3</th>${HEADINGS.map((h) => `<td class="c" ${h === "Agama" ? "" : 'rowspan="2"'}>${h}</td>`).join("")}</tr>
    <tr class="head tall"><th>4</th><td></td></tr>
    <tr class="numbers"><th>5</th>${HEADINGS.map((_, i) => `<td class="c">${i + 1}</td>`).join("")}</tr>
    ${STUDENTS.map(studentRow).join("")}
  </tbody>
</table>
</div>
<div class="bar">
  <button aria-label="Scroll up">${svg("up")}</button>
  <div class="thumb"></div>
  <div class="space"></div>
  <button aria-label="Scroll down">${svg("caret")}</button>
</div>`);

/* ---------- sheet tabs and status bar ---------- */

const SHEETS = [["DEPAN", 68], ["TUTOR", 67], ["KKM", 52], ["SISWA", 64], ["SPIRIT", 63], ["SOSIAL", 66],
  ["PAI3", 53], ["PKN3", 57], ["BIND3", 62], ["MTK3", 61], ["SBDP3", 63], ["PJOK3", 65], ["JAWA3", 66],
  ["BING3", 63], ["MLK3", 58], ["PAI4", 52], ["PKN4", 57]];

component("sheet-tabs", `
:host { display: flex; height: 28px; background: #6a6a6a; color: #f2f2f2; }
.arrows { display: flex; flex: none; width: 100px; border-top: 1px solid #9b9b9b; }
.arrows button { width: 28px; height: 26px; }
.arrows .first { margin-left: 16px; color: #9b9b9b; }
.tabs { display: flex; flex: none; }
.tabs button { box-sizing: border-box; height: 27px; padding-bottom: 1px; border-top: 1px solid #9b9b9b;
  background: linear-gradient(#9b9b9b, #9b9b9b) 0 3px / 1px 20px no-repeat; }
.tabs .on { height: 24px; padding: 4px 0 0; background: #fff; color: #217346; font-weight: 700; border: 0; border-bottom: 2px solid #217346; }
.tabs .on + button { background: none; }
.tabs .cut { width: 27px; padding-left: 13px; justify-content: flex-start; overflow: hidden; }
.rest { display: flex; flex: 1; border-top: 1px solid #9b9b9b; justify-content: flex-end; align-items: flex-start; }
.rest > button { height: 26px; }
.scroll { display: flex; flex: none; width: 92px; height: 15px; margin: 6px 24px 0 4px; background: #575757; color: #222; }
.scroll button, .scroll div { box-sizing: border-box; width: 15px; border: 1px solid #3c3c3c; background: #999; }
.scroll div { width: 33px; margin-right: auto; }
`, () => `
<div class="arrows">
  <button class="first" aria-label="Previous sheets">${svg("left")}</button>
  <button aria-label="Next sheets">${svg("right")}</button>
</div>
<div class="tabs">
  ${SHEETS.map(([name, w]) => `<button class="${name === "SISWA" ? "on" : ""}" style="width:${w}px">${name}</button>`).join("")}
  <button class="cut">BIN</button>
</div>
<div class="rest">
  <button style="width:28px" aria-label="More sheets">...</button>
  <button style="width:26px" aria-label="New sheet">${svg("addsheet")}</button>
  <button style="width:28px" aria-label="Resize tabs">${svg("dots")}</button>
  <div class="scroll"><button aria-label="Scroll left">${svg("left")}</button><div></div><button aria-label="Scroll right">${svg("right")}</button></div>
</div>`);

component("status-bar", `
:host { display: flex; align-items: center; height: 22px; background: #585858; border-top: 1px solid #444; box-sizing: border-box; font-size: 11px; color: #f2f2f2; }
.state { flex: 1; padding: 0 0 2px 8px; }
.view { width: 38px; height: 21px; }
.on { background: #444; }
.step { width: 16px; height: 20px; }
input { appearance: none; width: 100px; height: 20px; background: linear-gradient(#eee, #eee) 0 50% / 100% 1px no-repeat; }
input::-webkit-slider-thumb { appearance: none; width: 4px; height: 11px; background: #fff; }
.zoom { width: 39px; padding: 0 8px 2px 0; text-align: right; }
`, () => `
<span class="state">Ready</span>
<button class="view on" aria-label="Normal">${svg("viewnormal")}</button>
<button class="view" aria-label="Page Layout">${svg("viewpage")}</button>
<button class="view" aria-label="Page Break Preview">${svg("viewbreak")}</button>
<button class="step" aria-label="Zoom out">${svg("minus")}</button>
<input type="range" min="10" max="190" value="100" aria-label="Zoom">
<button class="step" aria-label="Zoom in">${svg("plus")}</button>
<span class="zoom">100%</span>`);

/* ---------- desktop task bar ---------- */

component("task-bar", `
:host { display: flex; height: 30px; color: #fff;
  background: linear-gradient(90deg, #333 0, #33312d 14%, #392b0b 18%, #392b0b 68%, #2b240f 71%, #0f1c26 75%, #171717 82%, #171717); }
button { height: 30px; width: 36px; }
.app { width: 28px; margin: 0 5px 0 4px; box-shadow: inset 0 -2px #76b9ed; }
.app.on { width: 36px; margin: 0; background: #645a43; }
.tray { display: flex; margin-left: auto; }
.tray button { width: 24px; }
`, () => `
<button aria-label="Start">${svg("windows")}</button>
<button aria-label="Cortana">${svg("cortana")}</button>
<button aria-label="Task View">${svg("taskview")}</button>
<span style="width:3px"></span>
<button class="app" aria-label="File Explorer">${svg("explorer")}</button>
<button class="app" aria-label="Chrome">${svg("chrome")}</button>
<button class="app" aria-label="Download Manager">${svg("idm")}</button>
<button class="app on" aria-label="Excel">${svg("excel")}</button>
<div class="tray">
  <button style="width:36px" aria-label="Contact">${svg("avatar")}</button>
  <button style="width:36px" aria-label="People">${svg("people")}</button>
  <button aria-label="Hidden icons">${svg("trayup")}</button>
  <button aria-label="Battery">${svg("battery")}</button>
  <button aria-label="Network">${svg("wifi")}</button>
  <button aria-label="Volume">${svg("volume")}</button>
  <button style="width:37px">IND</button>
  <button style="width:40px">18.05</button>
  <button style="width:39px;margin-right:13px" aria-label="Notifications">${svg("notify")}</button>
</div>`);

component("excel-app", `
:host { display: flex; flex-direction: column; height: 100vh; }
`, () => `
<title-bar>- APLIKASI RAPORT KELAS 1 SMT 1 REVISI 2018 Dicariguru.com - Excel</title-bar>
<ribbon-tabs></ribbon-tabs>
<excel-ribbon></excel-ribbon>
<sheet-grid></sheet-grid>
<sheet-tabs></sheet-tabs>
<status-bar></status-bar>
<task-bar></task-bar>`);
</script>
</body>
</html>
